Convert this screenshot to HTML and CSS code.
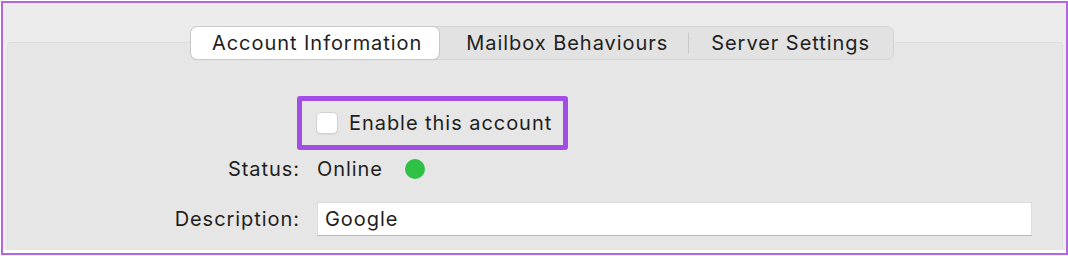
FILE: index.html
```html
<!DOCTYPE html>
<html>
<head>
<meta charset="utf-8">
<link rel="stylesheet" href="styles.css">
</head>
<body>
<div class="frame">
  <div class="window">
    <div class="panel">
      <div class="tabs">
        <div class="tab selected">Account Information</div>
        <div class="tab">Mailbox Behaviours</div>
        <div class="sep"></div>
        <div class="tab">Server Settings</div>
      </div>
      <div class="form">
        <div class="row row-check">
          <div class="label"></div>
          <div class="highlight">
            <span class="checkbox"></span>
            <span class="text">Enable this account</span>
          </div>
        </div>
        <div class="row row-status">
          <div class="label">Status:</div>
          <span class="text">Online</span>
          <span class="dot"></span>
        </div>
        <div class="row row-desc">
          <div class="label">Description:</div>
          <div class="input">Google</div>
        </div>
      </div>
    </div>
  </div>
</div>
</body>
</html>
```
FILE: styles.css
```css
html, body {
  margin: 0;
  padding: 0;
  background: #ffffff;
}
body {
  width: 1068px;
  height: 256px;
  overflow: hidden;
  font-family: "Inter", "Liberation Sans", sans-serif;
  color: #1e1e1e;
  letter-spacing: 0.95px;
}
.frame {
  box-sizing: border-box;
  width: 1067px;
  height: 254px;
  margin: 1px 0 0 1px;
  border: 2px solid #b168dc;
  background: #ffffff;
}
.window {
  height: 247px;
  background: #ececec;
  padding: 0 3px 0 4px;
  box-sizing: border-box;
}
.panel {
  position: relative;
  height: 247px;
  padding-top: 23px;
  box-sizing: border-box;
}
.panel::before {
  content: "";
  position: absolute;
  left: 0;
  right: 0;
  top: 39px;
  bottom: 0;
  background: #e6e6e6;
  border-top: 1px solid #dcdcdc;
  border-left: 1px solid #e0e0e0;
  border-right: 1px solid #e0e0e0;
  border-radius: 4px 4px 0 0;
}
.tabs {
  position: relative;
  display: flex;
  align-items: center;
  width: fit-content;
  margin-left: 184px;
  height: 34px;
  box-sizing: border-box;
  background: #e2e2e2;
  border: 1px solid #d4d4d4;
  border-radius: 7px;
  font-size: 20px;
}
.tab {
  height: 32px;
  line-height: 32px;
  white-space: nowrap;
}
.tab.selected {
  background: #ffffff;
  border-radius: 6px;
  box-shadow: 0 0 0 1px #c8c8c8, 0 1px 1px rgba(0,0,0,0.15);
  margin-left: -1px;
  padding: 0 17px 0 21px;
}
.tab:nth-child(2) {
  padding: 0 20px 0 27px;
}
.tab:last-child {
  padding: 0 23px 0 22px;
}
.sep {
  width: 1px;
  height: 20px;
  background: #c9c9c9;
}
.form {
  position: relative;
  font-size: 20px;
}
.row {
  display: flex;
  align-items: center;
}
.label {
  width: 310px;
  text-align: right;
  padding-right: 17px;
  box-sizing: border-box;
  flex: none;
}
.row-check {
  margin-top: 36px;
}
.highlight {
  display: flex;
  align-items: center;
  margin-left: -20px;
  width: 271px;
  height: 54px;
  box-sizing: border-box;
  border: 5px solid #a24ee6;
  border-radius: 3px;
  padding-left: 14px;
}
.checkbox {
  width: 22px;
  height: 22px;
  box-sizing: border-box;
  background: #ffffff;
  border: 1px solid #d2d2d2;
  border-radius: 5px;
  margin-right: 11px;
  box-shadow: 0 1px 1px rgba(0,0,0,0.06);
}
.row-status {
  margin-top: 4px;
  height: 30px;
}
.dot {
  width: 20px;
  height: 20px;
  border-radius: 50%;
  background: #2ec145;
  margin-left: 22px;
}
.row-desc {
  margin-top: 18px;
}
.input {
  width: 715px;
  height: 34px;
  line-height: 33px;
  box-sizing: border-box;
  background: #ffffff;
  border: 1px solid #dcdcdc;
  border-bottom-color: #b8b8b8;
  padding-left: 7px;
}
```
